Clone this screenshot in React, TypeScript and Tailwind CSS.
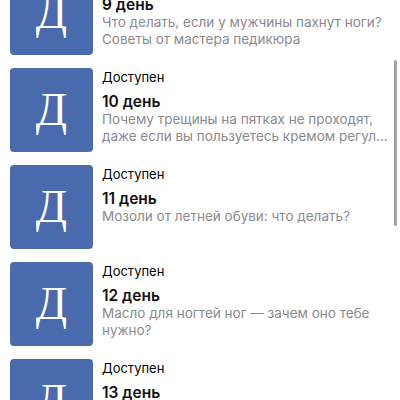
import React from 'react';

const lessons = [
  { day: 9, text: 'Что делать, если у мужчины пахнут ноги? Советы от мастера педикюра' },
  { day: 10, text: 'Почему трещины на пятках не проходят, даже если вы пользуетесь кремом регул...' },
  { day: 11, text: 'Мозоли от летней обуви: что делать?' },
  { day: 12, text: 'Масло для ногтей ног — зачем оно тебе нужно?' },
  { day: 13, text: 'Как ухаживать за стопами зимой' },
];

function LessonRow({ day, text }: { day: number; text: string }) {
  return (
    <div className="flex gap-[9px] pl-[10px] pr-[12px]">
      <div className="w-[83px] h-[84px] shrink-0 rounded-[4px] bg-[#4a6aae] flex items-center justify-center">
        <span
          className="text-white text-[46px] leading-none"
          style={{ fontFamily: '"Liberation Serif", "DejaVu Serif", serif' }}
        >
          Д
        </span>
      </div>
      <div className="flex-1 min-w-0 pt-px">
        <div className="text-[13px] leading-[16px] text-black">Доступен</div>
        <div className="mt-[8px] text-[15.5px] leading-[18px] font-semibold text-[#111]">{day} день</div>
        <div className="text-[13.5px] leading-[17px] text-[#8a8a8e] line-clamp-2">{text}</div>
      </div>
    </div>
  );
}

export default function App() {
  return (
    <div
      className="relative w-[400px] h-[400px] overflow-hidden bg-white"
      style={{ fontFamily: 'Inter, "Noto Sans", sans-serif' }}
    >
      <div className="flex flex-col gap-[13px] mt-[-29px]">
        {lessons.map((l) => (
          <LessonRow key={l.day} day={l.day} text={l.text} />
        ))}
      </div>
      {/* scroll indicator */}
      <div className="absolute right-[3px] top-[60px] w-[3px] h-[166px] rounded-full bg-[#a3a3a3]" />
    </div>
  );
}
